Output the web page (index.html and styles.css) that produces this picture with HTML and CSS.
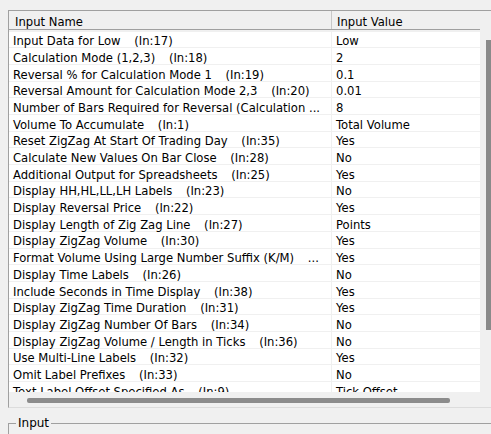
FILE: index.html
```html
<!DOCTYPE html>
<html lang="en">
<head>
<meta charset="UTF-8" />
<title>Inputs</title>
<link rel="stylesheet" href="styles.css">
</head>
<body>
  <div class="grid-box">
    <div class="grid-main">
      <div class="grid-view">
        <div class="row head">
          <div class="cell name">Input Name</div>
          <div class="cell value">Input Value</div>
        </div>
        <div class="rows">
          <div class="row"><div class="cell name">Input Data for Low <span class="ln">(In:17)</span></div><div class="cell value">Low</div></div>
          <div class="row"><div class="cell name">Calculation Mode (1,2,3) <span class="ln">(In:18)</span></div><div class="cell value">2</div></div>
          <div class="row"><div class="cell name">Reversal % for Calculation Mode 1 <span class="ln">(In:19)</span></div><div class="cell value">0.1</div></div>
          <div class="row"><div class="cell name">Reversal Amount for Calculation Mode 2,3 <span class="ln">(In:20)</span></div><div class="cell value">0.01</div></div>
          <div class="row"><div class="cell name">Number of Bars Required for Reversal (Calculation ...</div><div class="cell value">8</div></div>
          <div class="row"><div class="cell name">Volume To Accumulate <span class="ln">(In:1)</span></div><div class="cell value">Total Volume</div></div>
          <div class="row"><div class="cell name">Reset ZigZag At Start Of Trading Day <span class="ln">(In:35)</span></div><div class="cell value">Yes</div></div>
          <div class="row"><div class="cell name">Calculate New Values On Bar Close <span class="ln">(In:28)</span></div><div class="cell value">No</div></div>
          <div class="row"><div class="cell name">Additional Output for Spreadsheets <span class="ln">(In:25)</span></div><div class="cell value">Yes</div></div>
          <div class="row"><div class="cell name">Display HH,HL,LL,LH Labels <span class="ln">(In:23)</span></div><div class="cell value">No</div></div>
          <div class="row"><div class="cell name">Display Reversal Price <span class="ln">(In:22)</span></div><div class="cell value">Yes</div></div>
          <div class="row"><div class="cell name">Display Length of Zig Zag Line <span class="ln">(In:27)</span></div><div class="cell value">Points</div></div>
          <div class="row"><div class="cell name">Display ZigZag Volume <span class="ln">(In:30)</span></div><div class="cell value">Yes</div></div>
          <div class="row"><div class="cell name">Format Volume Using Large Number Suffix (K/M) <span class="ln">...</span></div><div class="cell value">Yes</div></div>
          <div class="row"><div class="cell name">Display Time Labels <span class="ln">(In:26)</span></div><div class="cell value">No</div></div>
          <div class="row"><div class="cell name">Include Seconds in Time Display <span class="ln">(In:38)</span></div><div class="cell value">Yes</div></div>
          <div class="row"><div class="cell name">Display ZigZag Time Duration <span class="ln">(In:31)</span></div><div class="cell value">Yes</div></div>
          <div class="row"><div class="cell name">Display ZigZag Number Of Bars <span class="ln">(In:34)</span></div><div class="cell value">No</div></div>
          <div class="row"><div class="cell name">Display ZigZag Volume / Length in Ticks <span class="ln">(In:36)</span></div><div class="cell value">No</div></div>
          <div class="row"><div class="cell name">Use Multi-Line Labels <span class="ln">(In:32)</span></div><div class="cell value">Yes</div></div>
          <div class="row"><div class="cell name">Omit Label Prefixes <span class="ln">(In:33)</span></div><div class="cell value">No</div></div>
          <div class="row"><div class="cell name">Text Label Offset Specified As <span class="ln">(In:9)</span></div><div class="cell value">Tick Offset</div></div>
        </div>
      </div>
      <div class="vscroll"><div class="vthumb"></div></div>
    </div>
    <div class="hscroll"><div class="hthumb"></div></div>
  </div>

  <div class="group">
    <div class="group-head"><span class="group-title">Input</span></div>
  </div>
</body>
</html>
```

FILE: styles.css
```css
body {
  margin: 0;
  background: #f0f0f0;
  font-family: "DejaVu Sans", Verdana, sans-serif;
  font-size: 11.6px;
  color: #000;
  overflow: hidden;
  height: 434px;
}
.grid-box {
  margin: 10px 0 0 8px;
  width: 500px;
  border-top: 1px solid #a0a0a0;
  border-left: 1px solid #a0a0a0;
  border-bottom: 1px solid #dcdcdc;
}
.grid-main {
  display: flex;
}
.grid-view {
  width: 471px;
  height: 381px;
  overflow: hidden;
}
.row {
  display: grid;
  grid-template-columns: 323px 148px;
  grid-template-rows: 15.7px;
  height: 16.7px;
  box-sizing: border-box;
  background: #fff;
  border-bottom: 1px solid #f0f0f0;
}
.row.head {
  grid-template-rows: 18px;
  height: 19px;
  background: #f0f0f0;
  border-bottom: 1px solid #a0a0a0;
  margin-bottom: 1.6px;
}
/* clip long names sideways only, so descenders stay whole */
.cell {
  white-space: nowrap;
  overflow-x: clip;
  overflow-y: visible;
  line-height: 15px;
  padding: 2.6px 0 0 4px;
  box-sizing: border-box;
}
.cell.name {
  border-right: 1px solid #f0f0f0;
}
.ln {
  padding-left: 10px;
}
.head .cell {
  line-height: 15px;
  padding: 4px 0 0 6px;
}
.head .cell.name {
  border-right: 1px solid #c8c8c8;
}
.head .cell.value {
  padding-left: 5px;
}
.vscroll {
  flex: 1;
  padding: 29px 0 0 6px;
}
.vthumb {
  width: 8px;
  height: 290px;
  background: #8a8a8a;
}
.hscroll {
  height: 15px;
  padding: 6px 0 0 18px;
  box-sizing: border-box;
}
.hthumb {
  width: 423px;
  height: 5px;
  border-radius: 2px;
  background: #8c8c8c;
}

/* group box under the grid */
.group {
  margin: 8px 0 0 8px;
  width: 520px;
}
.group-head {
  display: flex;
  align-items: flex-start;
}
.group-head::before {
  content: "";
  width: 7px;
  height: 30px;
  margin-top: 7px;
  border-top: 1px solid #a0a0a0;
  border-left: 1px solid #a0a0a0;
}
.group-head::after {
  content: "";
  flex: 1;
  margin-top: 7px;
  border-top: 1px solid #a0a0a0;
}
.group-title {
  padding: 0 2px;
  line-height: 15px;
  font-size: 12px;
}
```
